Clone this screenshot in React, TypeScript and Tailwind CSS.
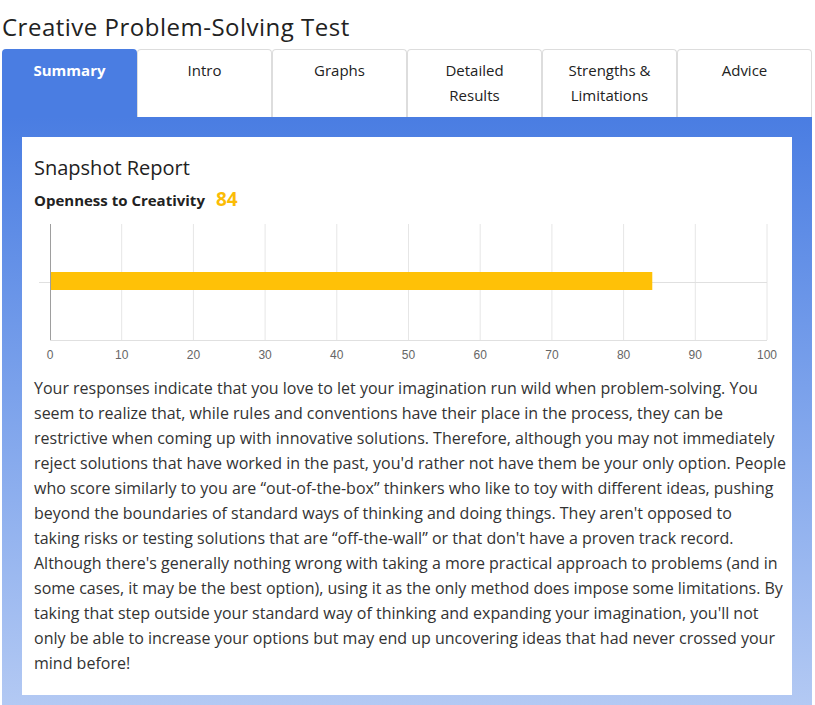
import React from "react";

const tabs = [
  { label: "Summary", active: true },
  { label: "Intro" },
  { label: "Graphs" },
  { label: "Detailed Results", lines: ["Detailed", "Results"] },
  { label: "Strengths & Limitations", lines: ["Strengths &", "Limitations"] },
  { label: "Advice" },
];

const paraLines = [
  "Your responses indicate that you love to let your imagination run wild when problem-solving. You",
  "seem to realize that, while rules and conventions have their place in the process, they can be",
  "restrictive when coming up with innovative solutions. Therefore, although you may not immediately",
  "reject solutions that have worked in the past, you'd rather not have them be your only option. People",
  "who score similarly to you are “out-of-the-box” thinkers who like to toy with different ideas, pushing",
  "beyond the boundaries of standard ways of thinking and doing things. They aren't opposed to",
  "taking risks or testing solutions that are “off-the-wall” or that don't have a proven track record.",
  "Although there's generally nothing wrong with taking a more practical approach to problems (and in",
  "some cases, it may be the best option), using it as the only method does impose some limitations. By",
  "taking that step outside your standard way of thinking and expanding your imagination, you'll not",
  "only be able to increase your options but may end up uncovering ideas that had never crossed your",
  "mind before!",
];

function Chart() {
  const x0 = 16;
  const x1 = 733;
  const ticks = [0, 10, 20, 30, 40, 50, 60, 70, 80, 90, 100];
  const sx = (v: number) => x0 + ((x1 - x0) * v) / 100;
  return (
    <svg width="746" height="150" className="block">
      {ticks.slice(1).map((t) => (
        <line key={t} x1={sx(t)} x2={sx(t)} y1={9} y2={125} stroke="#e6e6e6" strokeWidth={1} />
      ))}
      <line x1={x0} x2={x1} y1={125.5} y2={125.5} stroke="#e0e0e0" strokeWidth={1} />
      <line x1={5} x2={x1} y1={67.5} y2={67.5} stroke="#e0e0e0" strokeWidth={1} />
      <rect x={x0} y={57} width={sx(84) - x0} height={18} fill="#ffc107" />
      <line x1={x0 + 0.5} x2={x0 + 0.5} y1={9} y2={125} stroke="#9e9e9e" strokeWidth={1} />
      {ticks.map((t) => (
        <text
          key={t}
          x={sx(t)}
          y={144}
          textAnchor="middle"
          fontSize="12"
          fill="#666"
          fontFamily="Arial, 'Liberation Sans', sans-serif"
        >
          {t}
        </text>
      ))}
    </svg>
  );
}

export default function App() {
  return (
    <div className="w-[815px] h-[705px] bg-white font-['Open_Sans',sans-serif] text-[#333]">
      <h1 className="pl-[2px] pt-[12px] h-[49px] text-[24px] leading-[30px] tracking-[0.5px] text-[#222]">
        Creative Problem-Solving Test
      </h1>
      <div className="ml-[2px] w-[810px] flex">
        {tabs.map((t) => (
          <div
            key={t.label}
            className={
              t.active
                ? "w-[135px] h-[68px] bg-[#4a7de2] rounded-t-[4px] text-white font-bold text-center text-[15px] leading-[25px] pt-[9px]"
                : "w-[135px] h-[68px] bg-white border border-b-0 border-[#dddddd] rounded-t-[4px] text-[#222] text-center text-[15px] leading-[25px] pt-[8px]"
            }
          >
            {t.lines ? (
              <>
                <div>{t.lines[0]}</div>
                <div>{t.lines[1]}</div>
              </>
            ) : (
              t.label
            )}
          </div>
        ))}
      </div>
      <div className="ml-[2px] w-[810px] h-[588px] bg-gradient-to-b from-[#4a7de2] to-[#b3c9f3] pt-[20px] px-[20px]">
        <div className="bg-white h-[558px] pl-[12px] pr-[10px] pt-[18px]">
          <div className="text-[20px] leading-[26px] text-[#222]">Snapshot Report</div>
          <div className="mt-[7px] text-[15px] leading-[22px] font-bold text-[#222] flex items-baseline">
            Openness to Creativity
            <span className="ml-[11px] text-[#fbbc05] text-[19px]">84</span>
          </div>
          <div className="mt-[4px]">
            <Chart />
          </div>
          <p className="mt-[11px] text-[16px] leading-[25px] text-[#333]">
            {paraLines.map((l, i) => (
              <span key={i} className="block whitespace-nowrap">
                {l}
              </span>
            ))}
          </p>
        </div>
      </div>
    </div>
  );
}
